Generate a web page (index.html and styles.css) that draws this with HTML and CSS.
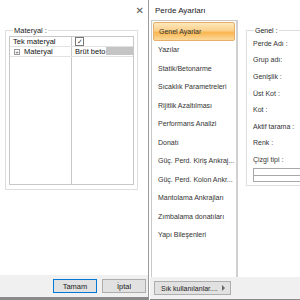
FILE: index.html
```html
<!DOCTYPE html>
<html>
<head>
    <title>Perde Ayarları</title>
    <link rel="stylesheet" href="styles.css">
</head>
<body>
  <div class="desk">
    <div class="win win-left">
        <div class="titlebar">
            <span class="close">&#x2715;</span>
        </div>
        <div class="win-body">
            <fieldset class="group">
                <legend>Materyal :</legend>
                <div class="grid">
                    <div class="row">
                        <div class="cell">Tek materyal</div>
                        <div class="cell"><span class="check">&#x2713;</span></div>
                    </div>
                    <div class="row">
                        <div class="cell"><span class="plus">+</span>Materyal</div>
                        <div class="cell">Brüt beto<span class="sel"></span></div>
                    </div>
                    <div class="row fill">
                        <div class="cell"></div>
                        <div class="cell"></div>
                    </div>
                </div>
            </fieldset>
        </div>
        <div class="footer">
            <button type="button" class="btn btn-default">Tamam</button>
            <button type="button" class="btn">İptal</button>
        </div>
    </div>

    <div class="win win-right">
        <div class="titlebar">
            <span class="title">Perde Ayarları</span>
        </div>
        <div class="win-body split">
            <ul class="menu">
                <li class="active">Genel Ayarlar</li>
                <li>Yazılar</li>
                <li>Statik/Betonarme</li>
                <li>Sıcaklık Parametreleri</li>
                <li>Rijitlik Azaltılması</li>
                <li>Performans Analizi</li>
                <li>Donatı</li>
                <li>Güç. Perd. Kiriş Ankraj...</li>
                <li>Güç. Perd. Kolon Ankr...</li>
                <li>Mantolama Ankrajları</li>
                <li>Zımbalama donatıları</li>
                <li>Yapı Bileşenleri</li>
            </ul>
            <div class="panel">
                <fieldset class="group general">
                    <legend>Genel :</legend>
                    <div class="field">Perde Adı :</div>
                    <div class="field">Grup adı:</div>
                    <div class="field">Genişlik :</div>
                    <div class="field">Üst Kot :</div>
                    <div class="field">Kot :</div>
                    <div class="field">Aktif tarama :</div>
                    <div class="field">Renk :</div>
                    <div class="field">Çizgi tipi :</div>
                    <div class="combo"><div class="combo-line"></div></div>
                </fieldset>
            </div>
        </div>
        <div class="footer">
            <button type="button" class="btn btn-fav"><span>Sık kullanılanlar....</span><span class="arrow"></span></button>
        </div>
    </div>
  </div>
</body>
</html>
```
FILE: styles.css
```css
* {
    margin: 0;
    padding: 0;
    box-sizing: border-box;
}

body {
    font-family: "Liberation Sans", Arial, sans-serif;
    font-size: 7px;
    color: #333;
    background-color: #fff;
}

.desk {
    display: flex;
    width: 300px;
    height: 300px;
    overflow: hidden;
}

.win {
    display: flex;
    flex-direction: column;
    background-color: #fff;
}

.win-left {
    width: 149px;
    border-right: 1px solid #9a9a9a;
    border-bottom: 3px solid #8a8a8a;
}

.win-right {
    flex: 1;
    margin-left: 1px;
    border-bottom: 1px solid #8a8a8a;
}

.titlebar {
    height: 20px;
    display: flex;
    align-items: center;
    flex-shrink: 0;
}

.win-left .titlebar {
    justify-content: flex-end;
    padding-right: 4px;
}

.close {
    font-family: "DejaVu Sans", sans-serif;
    font-size: 10px;
    color: #555;
}

.title {
    font-size: 8px;
    padding-left: 5px;
    color: #222;
}

.win-body {
    flex: 1;
    background-color: #fff;
}

.win-left .win-body {
    padding: 6px 0 0 5px;
}

.group {
    border: 1px solid #dedede;
    padding: 1px 3px 2px 3px;
}

.group legend {
    font-size: 7.5px;
    padding: 0 1px;
    margin-left: 4px;
    color: #222;
}

.win-left .group {
    width: 133px;
    height: 164px;
}

.grid {
    display: flex;
    flex-direction: column;
    height: 149px;
    border: 1px solid #c8c8c8;
    font-size: 7.5px;
    color: #111;
}

.row {
    display: flex;
    height: 10px;
    border-bottom: 1px solid #e2e2e2;
}

.row.fill {
    flex: 1;
    border-bottom: none;
}

.cell {
    display: flex;
    align-items: center;
    padding-left: 3px;
    white-space: nowrap;
    overflow: hidden;
}

.cell:first-child {
    width: 62px;
    border-right: 1px solid #c8c8c8;
}

.cell:last-child {
    flex: 1;
}

.check {
    display: inline-flex;
    align-items: center;
    justify-content: center;
    width: 9px;
    height: 9px;
    border: 1px solid #777;
    font-size: 7px;
    line-height: 1;
    color: #444;
}

.plus {
    display: inline-flex;
    align-items: center;
    justify-content: center;
    width: 6px;
    height: 6px;
    border: 1px solid #999;
    font-size: 6px;
    line-height: 1;
    color: #555;
    margin: 0 4px 0 1px;
}

.sel {
    flex: 1;
    align-self: stretch;
    margin-left: 1px;
    margin-bottom: 1px;
    background-color: #c4c4c4;
}

.footer {
    height: 22px;
    flex-shrink: 0;
    display: flex;
    align-items: center;
    background-color: #f0f0f0;
}

.win-left .footer {
    justify-content: flex-end;
    gap: 5px;
    padding-right: 2px;
}

.btn {
    font-family: "Liberation Sans", Arial, sans-serif;
    font-size: 7.5px;
    color: #222;
    height: 14px;
    width: 44px;
    background-color: #e1e1e1;
    border: 1px solid #adadad;
}

.btn-default {
    border: 1px solid #0078d7;
}

.win-right .footer {
    padding-left: 4px;
}

.btn-fav {
    width: 77px;
    display: flex;
    align-items: center;
    justify-content: space-between;
    padding: 0 5px 0 6px;
    font-size: 7px;
    white-space: nowrap;
}

.arrow {
    width: 0;
    height: 0;
    border-top: 3px solid transparent;
    border-bottom: 3px solid transparent;
    border-left: 3px solid #666;
}

.split {
    display: flex;
}

.menu {
    list-style: none;
    width: 87px;
    margin-left: 1px;
    border: 1px solid #c9c9c9;
    border-bottom: none;
    border-right: 2px solid #d0d0d0;
    padding: 1px 1px 0 1px;
}

.menu li {
    height: 18.5px;
    display: flex;
    align-items: center;
    padding-left: 5px;
    white-space: nowrap;
    overflow: hidden;
}

.menu li.active {
    border: 1px solid #e7b06a;
    border-radius: 2px;
    background: linear-gradient(#fde8bd, #fbd08a 45%, #f9b650 55%, #fcd99b);
}

.panel {
    flex: 1;
    padding: 7px 0 0 8px;
}

.general {
    border-right: none;
    height: 159px;
    padding: 1px 0 0 6px;
    margin-right: -10px;
}

.general legend {
    font-size: 7px;
    margin-left: 1px;
}

.field {
    height: 16.6px;
    display: flex;
    align-items: center;
    white-space: nowrap;
}

.combo {
    height: 14px;
    border: 1px solid #a8a8a8;
    border-right: none;
    padding-top: 6px;
}

.combo-line {
    border-top: 1px solid #a8a8a8;
}
```
